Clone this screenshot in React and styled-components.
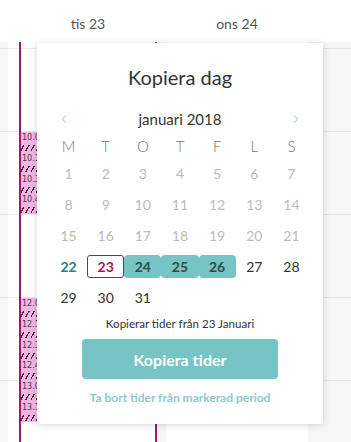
import styled, { createGlobalStyle, css } from 'styled-components';
import { ChevronLeft, ChevronRight } from 'lucide-react';

const GlobalStyle = createGlobalStyle`
  html, body {
    margin: 0;
    padding: 0;
  }
  body {
    font-family: Lato, 'Open Sans', sans-serif;
    background: #fff;
    color: #333;
  }
`;

const columns = '8px 11px 138px 9px 142px 1fr';
const magenta = '#9c1b6c';
const teal = '#76c5c4';

const hourLines = color => css`
  background-image: linear-gradient(to bottom, ${color} 0 1px, transparent 1px);
  background-size: 100% 83px;
  background-position: 0 6px;
`;

const Page = styled.div`
  position: relative;
  width: 351px;
  height: 442px;
  overflow: hidden;
  display: grid;
  grid-template-rows: 42px 1fr;
`;

const Header = styled.div`
  display: grid;
  grid-template-columns: ${columns};
  background: #fff;
`;

const DayLabel = styled.div`
  grid-column: ${p => p.$col};
  align-self: center;
  padding-top: 4px;
  text-align: center;
  font-size: 14px;
  color: #555;
`;

const Body = styled.div`
  display: grid;
  grid-template-columns: ${columns};
`;

const Lane = styled.div`
  background-color: ${p => (p.$white ? '#fff' : '#f6f6f6')};
  ${p => hourLines(p.$white ? '#ececec' : '#e4e4e4')};
`;

const DayColumn = styled(Lane)`
  box-sizing: border-box;
  display: grid;
  grid-template-rows: 6px repeat(20, 20.75px);
  align-content: start;
  ${p =>
    p.$selected &&
    css`
      border-left: 2px solid ${magenta};
      border-right: 2px solid ${magenta};
    `}
`;

const Block = styled.div`
  grid-row: ${p => p.$start + 2} / span ${p => p.$span};
  margin-top: 1px;
  background: #f3b6e4;
  display: flex;
  flex-direction: column;
  overflow: hidden;
`;

const Slot = styled.div`
  height: 20.75px;
  flex: none;
  display: flex;
  flex-direction: column;
`;

const SlotTime = styled.div`
  font-family: 'DejaVu Sans', sans-serif;
  font-size: 8px;
  line-height: 12px;
  padding-left: 1px;
  color: #4a3a48;
`;

const Hatch = styled.div`
  height: 6px;
  margin-top: 1px;
  background-image: repeating-linear-gradient(
    120deg,
    transparent 0 2px,
    #3a2a36 2px 3.2px,
    transparent 3.2px 4.5px
  );
`;

const Popup = styled.div`
  position: absolute;
  top: 43px;
  left: 37px;
  width: 286px;
  box-sizing: border-box;
  padding: 22px 13px 18px;
  background: #fff;
  box-shadow: 0 1px 7px rgba(0, 0, 0, 0.16);
`;

const Title = styled.h2`
  margin: 0;
  font-size: 20px;
  line-height: 24px;
  font-weight: 400;
  text-align: center;
  color: #333;
`;

const MonthNav = styled.div`
  margin-top: 20px;
  height: 20px;
  padding: 0 7px;
  display: flex;
  align-items: center;
  justify-content: space-between;
  color: #7dc1c1;
`;

const MonthLabel = styled.span`
  font-size: 15px;
  color: #333;
`;

const CalendarGrid = styled.div`
  display: grid;
  grid-template-columns: repeat(7, 1fr);
  grid-auto-rows: ${p => p.$row}px;
  margin-top: ${p => p.$top || 0}px;
`;

const Weekday = styled.div`
  display: flex;
  align-items: center;
  justify-content: center;
  font-size: 15px;
  font-weight: 300;
  color: #777;
`;

const Cell = styled.div`
  display: flex;
  align-items: center;
`;

const DayBox = styled.div`
  box-sizing: border-box;
  width: 100%;
  height: 23px;
  display: flex;
  align-items: center;
  justify-content: center;
  font-size: 14px;
  color: ${p => (p.$past ? '#bbb' : '#333')};
  ${p =>
    p.$today &&
    css`
      font-weight: 700;
      color: #2b7d8b;
    `}
  ${p =>
    p.$source &&
    css`
      font-weight: 700;
      color: #a3195b;
      border: 1px solid #a3195b;
      border-radius: 3px;
    `}
  ${p =>
    p.$range &&
    css`
      font-weight: 700;
      color: #2f4a4c;
      background: ${teal};
      border-radius: 4px;
    `}
`;

const Caption = styled.div`
  margin-top: 3px;
  font-size: 11.6px;
  line-height: 16px;
  text-align: center;
  color: #333;
`;

const CopyButton = styled.button`
  display: block;
  margin: 7px auto 0;
  width: 196px;
  height: 40px;
  border: none;
  border-radius: 4px;
  background: ${teal};
  color: #fff;
  font-family: inherit;
  font-size: 16px;
  font-weight: 700;
`;

const RemoveLink = styled.div`
  margin-top: 11px;
  font-size: 12px;
  line-height: 16px;
  font-weight: 700;
  text-align: center;
  color: #8fcaca;
`;

const weekdays = ['M', 'T', 'O', 'T', 'F', 'L', 'S'];
const days = Array.from({ length: 31 }, (_, i) => i + 1);

const slotLabels = (hour, count) =>
  Array.from({ length: count }, (_, i) => {
    const h = hour + Math.floor(i / 4);
    const m = ['00', '15', '30', '45'][i % 4];
    return `${h}.${m}`;
  });

const blocks = [
  { start: 4, span: 4, hour: 10 },
  { start: 12, span: 6, hour: 12 },
];

function Day({ n }) {
  return (
    <Cell>
      <DayBox
        $past={n < 22}
        $today={n === 22}
        $source={n === 23}
        $range={n >= 24 && n <= 26}
      >
        {n}
      </DayBox>
    </Cell>
  );
}

export default function App() {
  return (
    <>
      <GlobalStyle />
      <Page>
        <Header>
          <DayLabel $col={3}>tis 23</DayLabel>
          <DayLabel $col={5}>ons 24</DayLabel>
        </Header>
        <Body>
          <Lane />
          <Lane $white />
          <DayColumn $white $selected>
            {blocks.map(b => (
              <Block key={b.hour} $start={b.start} $span={b.span}>
                {slotLabels(b.hour, b.span).map(t => (
                  <Slot key={t}>
                    <SlotTime>{t}</SlotTime>
                    <Hatch />
                  </Slot>
                ))}
              </Block>
            ))}
          </DayColumn>
          <Lane />
          <DayColumn $white />
          <Lane />
        </Body>

        <Popup>
          <Title>Kopiera dag</Title>
          <MonthNav>
            <ChevronLeft size={14} strokeWidth={1.5} />
            <MonthLabel>januari 2018</MonthLabel>
            <ChevronRight size={14} strokeWidth={1.5} />
          </MonthNav>
          <CalendarGrid $row={25} $top={4}>
            {weekdays.map((d, i) => (
              <Weekday key={i}>{d}</Weekday>
            ))}
          </CalendarGrid>
          <CalendarGrid $row={31}>
            {days.map(n => (
              <Day key={n} n={n} />
            ))}
          </CalendarGrid>
          <Caption>Kopierar tider från 23 Januari</Caption>
          <CopyButton>Kopiera tider</CopyButton>
          <RemoveLink>Ta bort tider från markerad period</RemoveLink>
        </Popup>
      </Page>
    </>
  );
}
